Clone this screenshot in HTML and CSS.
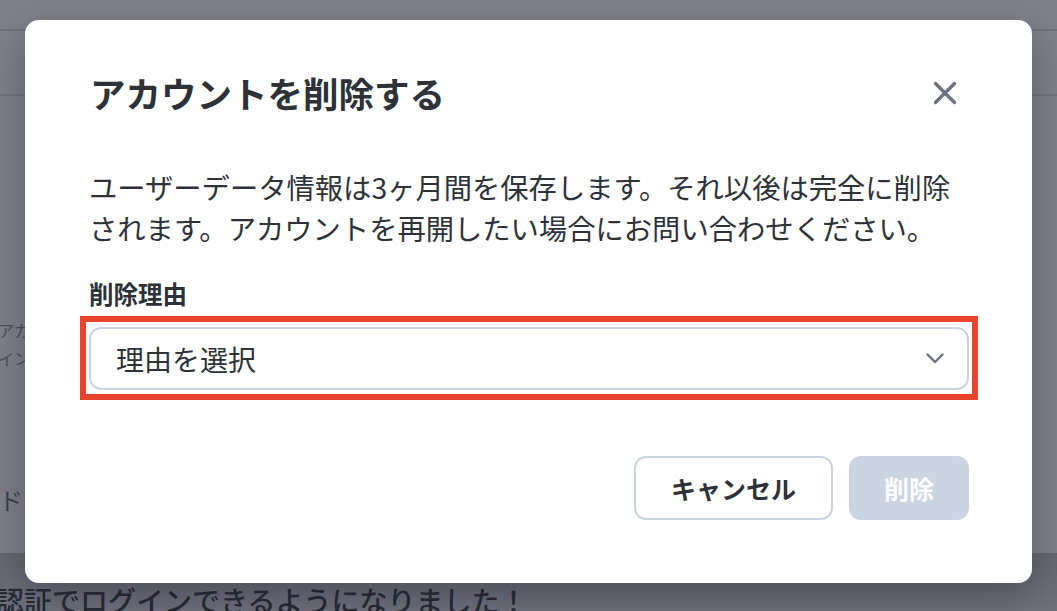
FILE: index.html
```html
<!DOCTYPE html>
<html lang="ja">
<head>
<meta charset="utf-8">
<title>アカウントを削除する</title>
<link rel="stylesheet" href="styles.css">
</head>
<body>
<div class="page">
  <div class="bar bar-top"></div>
  <div class="bar bar-sub"></div>
  <div class="content">
    <p class="bg-line">アカウント情報</p>
    <p class="bg-line">インストール</p>
    <p class="bg-label">ド</p>
  </div>
  <div class="banner"><span class="banner-text">認証でログインできるようになりました！</span></div>
</div>

<div class="modal" role="dialog" aria-labelledby="dlg-title">
  <div class="modal-head">
    <h2 class="modal-title" id="dlg-title">アカウントを削除する</h2>
    <button class="close-btn" aria-label="閉じる">
      <svg width="24" height="24" viewBox="0 0 24 24" fill="none" stroke="#6b7280" stroke-width="3.4" stroke-linecap="round"><path d="M2.5 2.5 L21.5 21.5 M21.5 2.5 L2.5 21.5"/></svg>
    </button>
  </div>
  <p class="modal-desc">ユーザーデータ情報は3ヶ月間を保存します。それ以後は完全に削除されます。アカウントを再開したい場合にお問い合わせください。</p>
  <label class="field-label">削除理由</label>
  <div class="highlight">
    <div class="select">
      <span class="select-text">理由を選択</span>
      <svg width="18" height="11" viewBox="0 0 18 11" fill="none" stroke="#6b7280" stroke-width="2.4" stroke-linecap="round" stroke-linejoin="round"><path d="M1.5 1.5 L9 9 L16.5 1.5"/></svg>
    </div>
  </div>
  <div class="actions">
    <button class="btn btn-cancel">キャンセル</button>
    <button class="btn btn-delete" disabled>削除</button>
  </div>
</div>
</body>
</html>
```

FILE: styles.css
```css
* { box-sizing: border-box; }

html, body {
  margin: 0;
  padding: 0;
  width: 1057px;
  height: 611px;
  overflow: hidden;
}

body {
  font-family: "Noto Sans CJK JP", "Noto Sans", sans-serif;
  background: #80828b;
  color: #2d3238;
}

.page {
  width: 1057px;
  height: 611px;
  display: flex;
  flex-direction: column;
  background: #7f818a;
}

.bar {
  border-bottom: 2px solid #6f717a;
}
.bar-top { height: 31px; }
.bar-sub { height: 65px; }

.content {
  flex: 1;
  padding-top: 220px;
  overflow: hidden;
}

.bg-line {
  margin: 0 0 0 -2px;
  font-size: 16px;
  line-height: 28px;
  color: #4d515b;
  white-space: nowrap;
}

.bg-label {
  margin: 112px 0 0 -1px;
  font-size: 24px;
  line-height: 32px;
  color: #3b3f48;
}

.banner {
  height: 58px;
  background: linear-gradient(#646571, #71727d);
  overflow: hidden;
}

.banner-text {
  display: block;
  margin: 27px 0 0 -4px;
  font-size: 28px;
  line-height: 40px;
  font-weight: 500;
  color: #262a33;
  white-space: nowrap;
}

.modal {
  position: absolute;
  left: 25px;
  top: 20px;
  width: 1007px;
  padding: 52px 63px 63px 64px;
  background: #fff;
  border-radius: 14px;
  box-shadow: 0 14px 40px rgba(25, 25, 40, 0.35);
  display: flex;
  flex-direction: column;
}

.modal-head {
  display: flex;
  align-items: center;
  justify-content: space-between;
  height: 42px;
}

.modal-title {
  margin: 0 0 0 1px;
  font-size: 35.5px;
  line-height: 42px;
  font-weight: 600;
  color: #2d3238;
}

.close-btn {
  width: 48px;
  height: 42px;
  padding: 0;
  border: 0;
  background: none;
  display: flex;
  align-items: center;
  justify-content: center;
}

.modal-desc {
  margin: 52px 0 0;
  font-size: 28.3px;
  line-height: 41px;
  color: #2d3238;
}

.field-label {
  display: block;
  margin-top: 28px;
  font-size: 24.5px;
  line-height: 35px;
  font-weight: 700;
  color: #2d3238;
}

.highlight {
  margin: 5px -9px 0;
  border: 6px solid #e8432b;
  padding: 5px 3px 4px;
}

.select {
  height: 63px;
  border: 2px solid #cbd5e1;
  border-radius: 12px;
  padding: 0 23px 0 25px;
  display: flex;
  align-items: center;
  justify-content: space-between;
  background: #fff;
}

.select-text {
  font-size: 28px;
  line-height: 40px;
  color: #2d3238;
}

.actions {
  margin-top: 56px;
  display: flex;
  justify-content: flex-end;
  gap: 16px;
}

.btn {
  height: 64px;
  padding: 0 35px;
  border-radius: 12px;
  font-family: inherit;
  font-size: 25px;
  font-weight: 700;
  line-height: 1;
}

.btn-cancel {
  background: #fff;
  border: 2px solid #cbd5e1;
  color: #2d3238;
}

.btn-delete {
  background: #cbd5e1;
  border: 0;
  color: #fff;
}
```
